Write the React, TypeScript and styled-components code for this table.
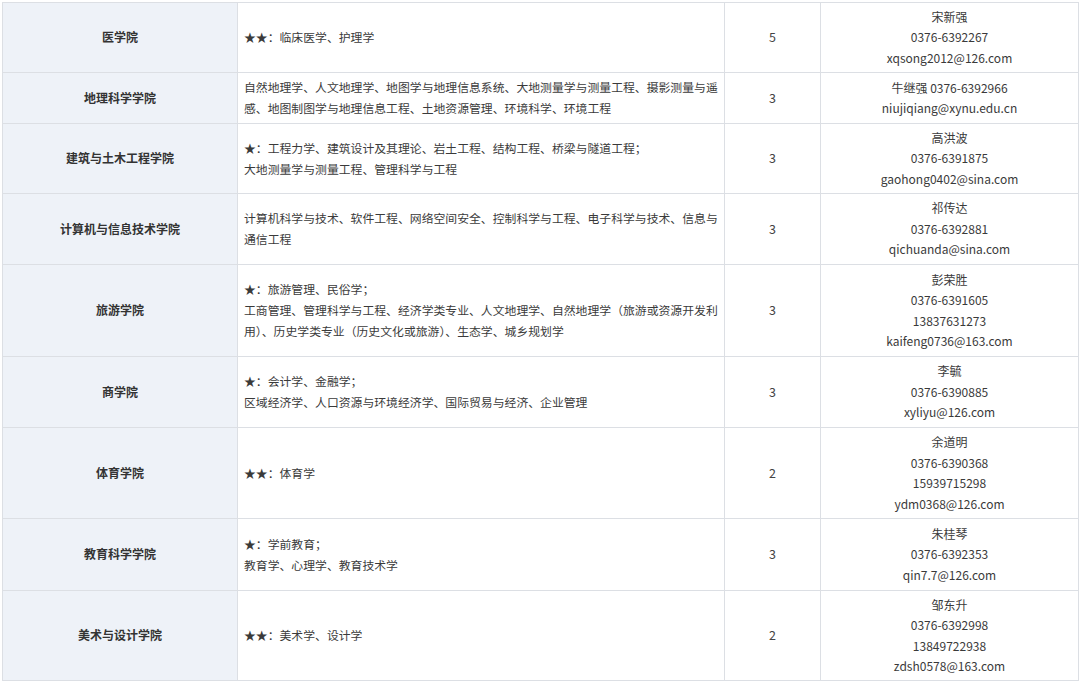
import styled, { createGlobalStyle } from "styled-components";

type Row = {
  college: string;
  majors: string[];
  count: number;
  contact: string[];
  height: number;
};

const rows: Row[] = [
  {
    college: "医学院",
    majors: ["★★：临床医学、护理学"],
    count: 5,
    contact: ["宋新强", "0376-6392267", "xqsong2012@126.com"],
    height: 70,
  },
  {
    college: "地理科学学院",
    majors: [
      "自然地理学、人文地理学、地图学与地理信息系统、大地测量学与测量工程、摄影测量与遥感、地图制图学与地理信息工程、土地资源管理、环境科学、环境工程",
    ],
    count: 3,
    contact: ["牛继强 0376-6392966", "niujiqiang@xynu.edu.cn"],
    height: 51,
  },
  {
    college: "建筑与土木工程学院",
    majors: [
      "★：工程力学、建筑设计及其理论、岩土工程、结构工程、桥梁与隧道工程；",
      "大地测量学与测量工程、管理科学与工程",
    ],
    count: 3,
    contact: ["高洪波", "0376-6391875", "gaohong0402@sina.com"],
    height: 70,
  },
  {
    college: "计算机与信息技术学院",
    majors: [
      "计算机科学与技术、软件工程、网络空间安全、控制科学与工程、电子科学与技术、信息与通信工程",
    ],
    count: 3,
    contact: ["祁传达", "0376-6392881", "qichuanda@sina.com"],
    height: 71,
  },
  {
    college: "旅游学院",
    majors: [
      "★：旅游管理、民俗学；",
      "工商管理、管理科学与工程、经济学类专业、人文地理学、自然地理学（旅游或资源开发利用）、历史学类专业（历史文化或旅游）、生态学、城乡规划学",
    ],
    count: 3,
    contact: ["彭荣胜", "0376-6391605", "13837631273", "kaifeng0736@163.com"],
    height: 92,
  },
  {
    college: "商学院",
    majors: [
      "★：会计学、金融学；",
      "区域经济学、人口资源与环境经济学、国际贸易与经济、企业管理",
    ],
    count: 3,
    contact: ["李毓", "0376-6390885", "xyliyu@126.com"],
    height: 71,
  },
  {
    college: "体育学院",
    majors: ["★★：体育学"],
    count: 2,
    contact: ["余道明", "0376-6390368", "15939715298", "ydm0368@126.com"],
    height: 91,
  },
  {
    college: "教育科学学院",
    majors: ["★：学前教育；", "教育学、心理学、教育技术学"],
    count: 3,
    contact: ["朱桂琴", "0376-6392353", "qin7.7@126.com"],
    height: 72,
  },
  {
    college: "美术与设计学院",
    majors: ["★★：美术学、设计学"],
    count: 2,
    contact: ["邹东升", "0376-6392998", "13849722938", "zdsh0578@163.com"],
    height: 90,
  },
];

const GlobalStyle = createGlobalStyle`
  html, body {
    margin: 0;
    padding: 0;
    background: #ffffff;
  }
  body {
    font-family: "Noto Sans CJK SC", "Noto Sans", sans-serif;
    color: #333333;
  }
`;

const Page = styled.div`
  width: 1080px;
  height: 682px;
  overflow: hidden;
  padding: 2px 2px 0 2px;
  box-sizing: border-box;
`;

const Table = styled.table`
  width: 1076px;
  border-collapse: collapse;
  table-layout: fixed;
`;

const Tr = styled.tr<{ $h: number }>`
  height: ${(p) => p.$h}px;
`;

const Cell = styled.td`
  border: 1px solid #dcdfe4;
  padding: 0;
  vertical-align: middle;
  box-sizing: border-box;
`;

const CollegeCell = styled(Cell)`
  background: #eef2f8;
  text-align: center;
  font-size: 12px;
  font-weight: 700;
  color: #333333;
  padding-bottom: 2px;
`;

const MajorCell = styled(Cell)`
  padding: 0 5px 2px 6px;
  font-size: 11.85px;
  line-height: 21px;
  color: #3a3a3a;
`;

const CountCell = styled(Cell)`
  text-align: center;
  font-size: 12.5px;
  color: #444444;
  padding-bottom: 2px;
`;

const ContactCell = styled(Cell)`
  text-align: center;
  font-size: 12px;
  line-height: 20.5px;
  color: #3a3a3a;
`;

const Line = styled.div``;

export default function App() {
  return (
    <Page>
      <GlobalStyle />
      <Table>
        <colgroup>
          <col style={{ width: 235 }} />
          <col style={{ width: 487 }} />
          <col style={{ width: 96 }} />
          <col style={{ width: 258 }} />
        </colgroup>
        <tbody>
          {rows.map((r) => (
            <Tr key={r.college} $h={r.height}>
              <CollegeCell>{r.college}</CollegeCell>
              <MajorCell>
                {r.majors.map((m) => (
                  <Line key={m}>{m}</Line>
                ))}
              </MajorCell>
              <CountCell>{r.count}</CountCell>
              <ContactCell>
                {r.contact.map((c) => (
                  <Line key={c}>{c}</Line>
                ))}
              </ContactCell>
            </Tr>
          ))}
        </tbody>
      </Table>
    </Page>
  );
}
